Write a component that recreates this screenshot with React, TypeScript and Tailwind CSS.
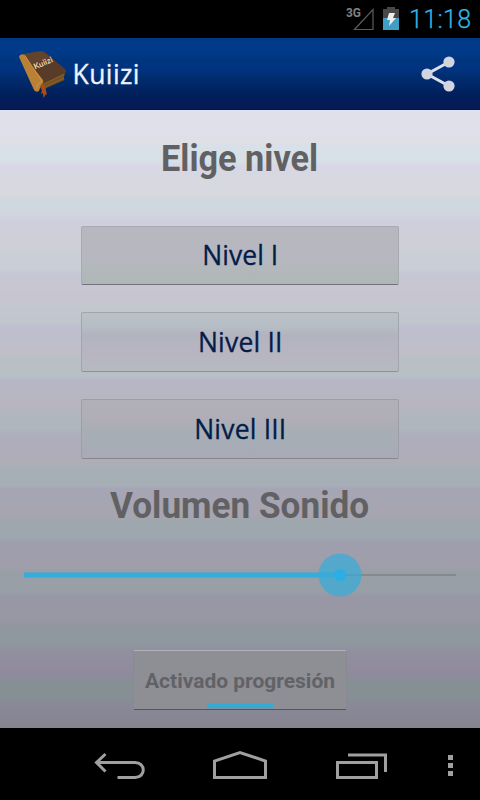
import React from 'react';

function StatusBar() {
  return (
    <div className="flex h-[38px] items-start bg-black">
      <svg className="h-[38px] w-full" viewBox="0 0 480 38" role="img">
        <text x="346" y="17" fontSize="13.5" fontWeight="700" fill="#808080" textLength="15" lengthAdjust="spacingAndGlyphs" fontFamily="Roboto, sans-serif">3G</text>
        <path d="M373 9.5V29.5H354.5Z" fill="none" stroke="#5c5c5c" strokeWidth="1.2" />
        <path d="M387 7h8v2h4v9h-16V9h4Z" fill="#484848" />
        <path d="M383 18h16v12h-16Z" fill="#3f9ec1" />
        <path d="M389 13h6l-2 5h3l-7 8 1-6h-3Z" fill="#eee" />
        <text x="409" y="28" fontSize="25" fontWeight="300" fill="#35b5e5" stroke="#35b5e5" strokeWidth=".25" textLength="62" fontFamily="Roboto, sans-serif">11:18</text>
      </svg>
    </div>
  );
}

function BookIcon() {
  return (
    <svg className="ml-[18px] h-[50px] w-[50px]" viewBox="18 49 50 50">
      <path d="M39 84L66 70Q63 75 64.500 80L42 90Z" fill="#73501f" />
      <path d="M42 85L65 74M42 88L64 78" stroke="#8f672e" strokeWidth=".8" />
      <path d="M23 54L41 51Q44 51 46 53L64 68Q67 71 65 73L42 84Z" fill="#583b29" />
      <path d="M23 54L42 51L50 57L31 66Z" fill="#62442c" />
      <path d="M19 57Q20 53 25 55L31 65L43 80Q44 83 41 85L39 91Q36 93 34 90Z" fill="#b98036" />
      <path d="M25 56L42 81Q37 83 36 89" stroke="#cf9443" strokeWidth="1" fill="none" />
      <path d="M40 87L42 90L41 94L43 93L43.500 98L46 94L47 95L45 86L43 84Z" fill="#a84c18" />
      <g fill="#f0deb3" fontSize="8" fontWeight="700" fontFamily="Lato, sans-serif">
        <text x="35" y="69.500" textLength="20" transform="rotate(-23 35 69.5)">Kuiizi</text>
      </g>
    </svg>
  );
}

function Header() {
  return (
    <header className="flex h-[72px] items-center bg-[linear-gradient(#003a87_0,#003b8a_14px,#00357d_22px,#003380_32px,#002c6d_40px,#012766_48px,#00205a_56px,#061d5b_62px,#051b55_70px,#031439_72px)]">
      <BookIcon />
      <svg className="ml-1 h-[50px] w-[100px]" viewBox="72 49 100 50">
        <text x="72.5" y="84" fontSize="26.5" fill="#eef4ff" stroke="#eef4ff" strokeWidth=".3" textLength="67" fontFamily="'Open Sans', sans-serif">Kuiizi</text>
      </svg>
      <svg className="mr-[18px] ml-auto h-[40px] w-[44px]" viewBox="418 54 44 40">
        <path d="M449 62L427 74L449 86" fill="none" stroke="#dbe0ec" strokeWidth="3" />
        <g fill="#d2d5df">
          <circle cx="449" cy="62" r="5.6" />
          <circle cx="427" cy="74" r="5.6" />
          <circle cx="449" cy="86" r="5.6" />
        </g>
      </svg>
    </header>
  );
}

function LevelButton({ label, width, tone }: { label: string; width: number; tone: string }) {
  return (
    <button className={`block w-[318px] rounded-[2px] border ${tone}`}>
      <svg className="h-[57px] w-full" viewBox="0 0 316 57">
        <text x={158.2 - width / 2} y="38.2" fontSize="26.5" fill="#041c48" stroke="#041c48" strokeWidth=".3" textLength={width} fontFamily="'Open Sans', sans-serif">{label}</text>
      </svg>
    </button>
  );
}

function Title({ label, width }: { label: string; width: number }) {
  return (
    <svg className="h-[50px] w-full" viewBox="0 0 480 50">
      <text x={239.6 - width / 2} y="37.3" fontSize="36" fontWeight="700" fill="#616164" textLength={width} lengthAdjust="spacingAndGlyphs" fontFamily="Roboto, sans-serif">{label}</text>
    </svg>
  );
}

function VolumeSlider() {
  return (
    <svg className="h-[50px] w-full" viewBox="0 550 480 50">
      <path d="M340 575H456" stroke="#85898e" strokeWidth="2" />
      <path d="M24 575H340" stroke="#35acdd" strokeWidth="5" />
      <circle cx="340" cy="575" r="21.5" fill="#38acda" fillOpacity=".72" />
      <circle cx="340" cy="575" r="6" fill="#2baee5" />
    </svg>
  );
}

function NavBar() {
  return (
    <nav className="h-[72px] bg-black">
      <svg className="h-full w-full" viewBox="0 728 480 72" fill="none" stroke="#a0a0a0" strokeWidth="3">
        <path d="M105.5 754L96.5 762.5L105.5 771.5M97 762.5H135C146 762.5 146 777.5 135 777.5H117.5" />
        <path d="M214.5 777.5V761L240 752.5L265.5 761V777.5Z" />
        <path d="M337.5 762.5H376.5V777.5H337.5ZM348 755H385.5V772" />
        <path d="M448 757.5H453M448 765.5H453M448 773.5H453" strokeWidth="5" />
      </svg>
    </nav>
  );
}

export default function App() {
  return (
    <div className="h-[800px] w-[480px] overflow-hidden bg-black font-['Roboto',sans-serif]">
      <StatusBar />
      <Header />
      <main className="flex h-[618px] flex-col items-center bg-[linear-gradient(#dfe2f2_0,#e0e0ec_3px,#dfdfe8_33px,#d9e0e7_35px,#d8e0e7_51px,#d7d7e6_56px,#d8d8e0_70px,#d8d8e0_84px,#d0d8de_88px,#cfd6df_105px,#cfcfdf_111px,#cfced8_126px,#cdcfd7_139px,#c8cfd7_144px,#c8cfd8_159px,#c7c6d6_164px,#c7c6d0_182px,#c7c6d0_192px,#c1c8ce_196px,#bfc6ce_213px,#bfbecf_218px,#bfbec8_243px,#b8c0c6_249px,#b8c0c6_266px,#b6b6c6_270px,#b7b5bf_296px,#b0b7be_304px,#afb7be_319px,#afaebe_324px,#b0adb7_350px,#a7afb6_359px,#a6afb6_375px,#a6a5b6_379px,#a7a5af_404px,#9fa7ae_411px,#9ea7ae_427px,#9f9eae_432px,#9f9eaa_455px,#989fa6_464px,#989fa6_481px,#9897a7_486px,#9997a3_509px,#90979e_516px,#8f979e_535px,#918fa0_540px,#908b9c_565px,#868f94_572px,#868f93_588px,#8a8998_593px,#868490_618px)] pt-[24px]">
        <Title label="Elige nivel" width={157} />
        <div className="mt-[42px] flex flex-col gap-[27px]">
          <LevelButton label="Nivel I" width={76} tone="h-[59px] border-[#a9a9b3] border-b-[#70717b] bg-[linear-gradient(#b7b7c0,#b8b7c1_50%,#b2b8bb_75%,#aeb7b6)]" />
          <LevelButton label="Nivel II" width={84.5} tone="h-[60px] border-[#a3a5ad] border-b-[#8f9099] bg-[linear-gradient(#bac0c8,#b6bec5_22%,#b3b3c0_38%,#b8b6c0_80%,#b4bac1)]" />
          <LevelButton label="Nivel III" width={92} tone="h-[60px] border-[#9c9da6] border-b-[#85868e] bg-[linear-gradient(#b1afb8,#afadb5_38%,#a7aeb5_52%,#a6adb5_75%,#aaa9b6)]" />
        </div>
        <div className="mt-[22px] w-full"><Title label="Volumen Sonido" width={259} /></div>
        <div className="mt-[19px] w-full"><VolumeSlider /></div>
        <button className="mt-[50px] h-[60px] w-[214px] shrink-0 rounded-[2px] border border-t-[#b0b1bb] border-r-[#898992] border-b-[#54555c] border-l-[#898992] bg-[#8e8e95]">
          <svg className="h-full w-full" viewBox="134 651 212 58">
            <text x="145" y="688" fontSize="21" fontWeight="700" fill="#626266" textLength="190" lengthAdjust="spacingAndGlyphs" fontFamily="Roboto, sans-serif">Activado progresión</text>
            <path d="M207 706H273" stroke="#37a9d5" strokeWidth="4.5" />
          </svg>
        </button>
      </main>
      <NavBar />
    </div>
  );
}
